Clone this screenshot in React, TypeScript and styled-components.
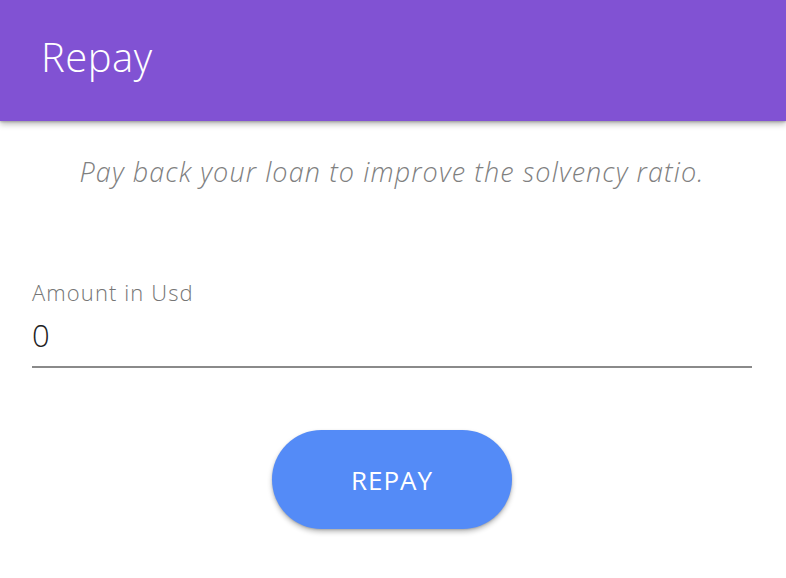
import React from "react";
import styled, { createGlobalStyle } from "styled-components";

const Global = createGlobalStyle`
  html, body { margin: 0; padding: 0; background: #ffffff; }
  body { font-family: "Open Sans", Lato, sans-serif; }
`;

const Page = styled.div`
  width: 786px;
  min-height: 578px;
  background: #ffffff;
  display: flex;
  flex-direction: column;
`;

const Header = styled.header`
  height: 121px;
  background: #8152d3;
  display: flex;
  align-items: center;
  padding-left: 41px;
  box-shadow: 0 3px 6px rgba(0, 0, 0, 0.28), 0 1px 2px rgba(0, 0, 0, 0.2);
  position: relative;
  z-index: 1;
`;

const Title = styled.h1`
  margin: 0;
  margin-top: -8px;
  color: #ffffff;
  font-family: "Open Sans", sans-serif;
  font-weight: 300;
  font-size: 40px;
  letter-spacing: 0.5px;
`;

const Body = styled.main`
  display: flex;
  flex-direction: column;
  padding: 0 34px 0 32px;
`;

const Subtitle = styled.p`
  margin: 36px 0 0;
  text-align: center;
  color: #808080;
  font-style: italic;
  font-weight: 300;
  font-size: 27px;
  letter-spacing: 1.1px;
  line-height: 30px;
`;

const Field = styled.label`
  display: flex;
  flex-direction: column;
  margin-top: 93px;
  border-bottom: 2px solid #8a8a8a;
  padding-bottom: 14px;
`;

const FieldLabel = styled.span`
  color: #757575;
  font-size: 22px;
  font-weight: 300;
  letter-spacing: 1.1px;
  line-height: 24px;
`;

const FieldValue = styled.span`
  margin-top: 14px;
  color: #222222;
  font-size: 31px;
  font-weight: 300;
  line-height: 34px;
`;

const Actions = styled.div`
  display: flex;
  justify-content: center;
  margin-top: 62px;
`;

const Button = styled.button`
  width: 240px;
  height: 99px;
  border: none;
  border-radius: 50px;
  background: #548bf7;
  color: #ffffff;
  font-family: "Open Sans", sans-serif;
  font-size: 26px;
  font-weight: 400;
  letter-spacing: 1px;
  box-shadow: 0 3px 5px rgba(0, 0, 0, 0.25), 0 1px 2px rgba(0, 0, 0, 0.15);
  cursor: pointer;
`;

export default function App() {
  return (
    <Page>
      <Global />
      <Header>
        <Title>Repay</Title>
      </Header>
      <Body>
        <Subtitle>Pay back your loan to improve the solvency ratio.</Subtitle>
        <Field>
          <FieldLabel>Amount in Usd</FieldLabel>
          <FieldValue>0</FieldValue>
        </Field>
        <Actions>
          <Button>REPAY</Button>
        </Actions>
      </Body>
    </Page>
  );
}
